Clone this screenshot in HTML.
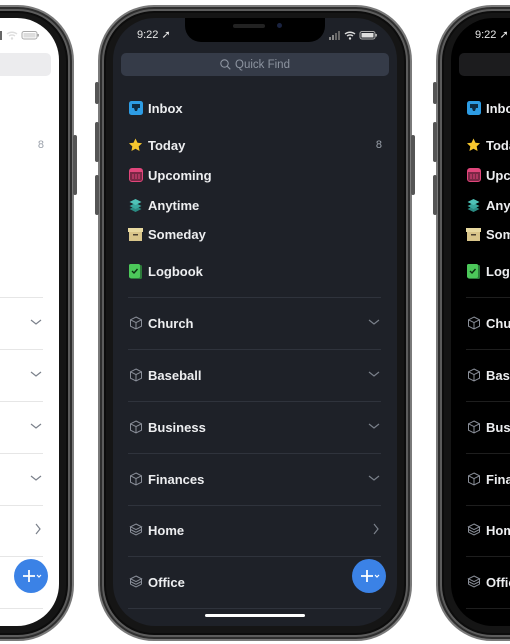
<!DOCTYPE html>
<html><head><meta charset="utf-8"><style>
*{margin:0;padding:0;box-sizing:border-box}
html,body{width:510px;height:644px;overflow:hidden}
body{background:#fff;position:relative;font-family:"Liberation Sans",sans-serif}
.ph{position:absolute;top:0;width:314px;height:644px}
.fr{position:absolute;left:0;top:5px;width:314px;height:636px;border-radius:56px;background:#151515;border:2px solid #7a7a7a;box-shadow:inset 0 0 0 2px #2e2e2e,inset 0 0 0 4px #5c5c5c,inset 0 0 0 6px #0c0c0c}
.btn{position:absolute;width:4px;background:#555;border-radius:2px}
.sc{position:absolute;left:15px;top:18px;width:284px;height:608px;border-radius:42px;overflow:hidden;background:#1e2128}
.notch{position:absolute;left:72px;top:0;width:140px;height:24px;background:#000;border-radius:0 0 16px 16px}
.notch:before{content:"";position:absolute;left:48px;top:6px;width:32px;height:4px;border-radius:2px;background:#222}
.notch:after{content:"";position:absolute;left:92px;top:5px;width:5px;height:5px;border-radius:50%;background:#1a2340}
.time{position:absolute;left:24px;top:10px;font-size:11px;color:#e8e8e8}
.stat{position:absolute;right:18px;top:12px}
.search{position:absolute;left:8px;top:35px;width:268px;height:23px;border-radius:5px;background:#353b48;color:#8d94a0;font-size:11.5px;display:flex;align-items:center;justify-content:center}
.search svg{margin-right:4px}
.row{position:absolute;left:15px;height:20px;width:254px;display:flex;align-items:center;color:#edeef0;font-size:13px;font-weight:bold}
.row .ic{width:15px;height:15px;margin-right:5px;display:flex;align-items:center;justify-content:center}
.row .r{margin-left:auto;color:#9aa0aa;font-weight:normal;font-size:11px}
.sep{position:absolute;left:15px;width:253px;height:1px;background:#2f333c}
.hb{position:absolute;left:92px;top:596px;width:100px;height:3px;border-radius:2px;background:#fff}
.fab{position:absolute;left:239px;top:541px;width:34px;height:34px;border-radius:50%;background:#3b82e6;color:#fff}
.light .sc{background:#fff}.light .row{color:#111}.light .sep{background:#e6e6e6}.light .search{background:#ececee}.light .time{color:#111}.light .hb{background:#000}
.black .sc{background:#000}.black .search{background:#1c1c1e}.black .sep{background:#1e1e1e}
</style></head><body>
<div id="p" class="ph" style="left:98px">
<div class="fr"></div>
<div class="btn" style="left:-3px;top:82px;height:22px"></div>
<div class="btn" style="left:-3px;top:122px;height:40px"></div>
<div class="btn" style="left:-3px;top:175px;height:40px"></div>
<div class="btn" style="left:313px;top:135px;height:60px"></div>
<div class="sc">
<div class="notch"></div>
<div class="time">9:22 ➚</div>
<svg class="stat" width="50" height="10" viewBox="0 0 50 10"><rect x="0" y="7" width="2" height="3" fill="#888"/><rect x="3" y="5" width="2" height="5" fill="#888"/><rect x="6" y="3" width="2" height="7" fill="#666"/><rect x="9" y="1" width="2" height="9" fill="#666"/><path d="M16 4a8 8 0 0 1 10 0M18 6a5 5 0 0 1 6 0" stroke="#ddd" stroke-width="1.4" fill="none"/><circle cx="21" cy="8.5" r="1.2" fill="#ddd"/><rect x="31" y="1.5" width="15" height="7.5" rx="2" fill="none" stroke="#aaa"/><rect x="32.5" y="3" width="12" height="4.5" fill="#ddd"/><rect x="46.5" y="4" width="1.5" height="2.5" fill="#aaa"/></svg>
<div class="search"><svg width="11" height="11"><circle cx="4.5" cy="4.5" r="3.7" stroke="#8d94a0" stroke-width="1.1" fill="none"/><path d="M7.3 7.3l3 3" stroke="#8d94a0" stroke-width="1.1"/></svg>Quick Find</div>
<div class="row" style="top:80px"><span class="ic"><svg width="14" height="14"><rect width="14" height="14" rx="2.5" fill="#2d9ce4"/><path d="M3 3h8v4h-2l-1 3h-2l-1-3h-2z" fill="#0d2c44"/></svg></span>Inbox</div>
<div class="row" style="top:117px"><span class="ic"><svg width="16" height="16" viewBox="0 0 24 24"><path d="M12 1.5l3.2 6.8 7.3.9-5.4 5 1.4 7.3L12 17.9l-6.5 3.6 1.4-7.3-5.4-5 7.3-.9z" fill="#f7c72f"/></svg></span>Today<span class="r">8</span></div>
<div class="row" style="top:147px"><span class="ic"><svg width="14" height="14"><rect x=".5" y=".5" width="13" height="13" rx="2.5" fill="#7a2745" stroke="#e0467b"/><rect x="1" y="1" width="12" height="3" fill="#e0467b"/><path d="M4 6v5M7 6v5M10 6v5" stroke="#e0467b"/></svg></span>Upcoming</div>
<div class="row" style="top:177px"><span class="ic"><svg width="15" height="14"><path d="M7.5 8l6 3-6 3-6-3z" fill="#2a8a82"/><path d="M7.5 5l6 3-6 3-6-3z" fill="#38a89e"/><path d="M7.5 1l6 3-6 3-6-3z" fill="#4fc3b8"/></svg></span>Anytime</div>
<div class="row" style="top:206px"><span class="ic"><svg width="15" height="13"><rect width="15" height="4" fill="#e8d9a0"/><rect x="1" y="4" width="13" height="9" fill="#d9c58a"/><rect x="5" y="6" width="5" height="1.5" fill="#4a4030"/></svg></span>Someday</div>
<div class="row" style="top:243px"><span class="ic"><svg width="13" height="15"><rect x="1" y="1" width="12" height="14" rx="1.5" fill="#2c7a3a"/><rect width="11" height="14" rx="1.5" fill="#4cc85a"/><path d="M3 7l2 2 3.5-4" stroke="#0c2e12" stroke-width="1.4" fill="none"/></svg></span>Logbook</div>
<div class="sep" style="top:279px"></div>
<div class="sep" style="top:331px"></div>
<div class="sep" style="top:383px"></div>
<div class="sep" style="top:435px"></div>
<div class="sep" style="top:487px"></div>
<div class="sep" style="top:538px"></div>
<div class="sep" style="top:590px"></div>
<div class="hb"></div>
<div class="fab"><svg width="34" height="34"><path d="M9 17h12M15 11v12" stroke="#fff" stroke-width="1.8"/><path d="M23 16l2 2 2-2" stroke="#fff" stroke-width="1.2" fill="none"/></svg></div>
</div>
</div>
<script>
var p=document.getElementById('p'),sc=p.querySelector('.sc');
var items=[["Church",295,"d"],["Baseball",347,"d"],["Business",399,"d"],["Finances",451,"d"],["Home",502,"r"],["Office",554,""]];
items.forEach(function(it){var d=document.createElement('div');d.className='row';d.style.top=it[1]+'px';
var stack=it[0]=="Home"||it[0]=="Office";
var ic=stack?'<svg width="14" height="14" viewBox="0 0 14 14" fill="none" stroke="#8a8f99" stroke-width="1"><path d="M7 1l5.5 2.8L7 6.6 1.5 3.8z"/><path d="M1.5 6.5L7 9.3l5.5-2.8M1.5 9.2L7 12l5.5-2.8M1.5 3.8v5.4M12.5 3.8v5.4"/></svg>':'<svg width="14" height="14" viewBox="0 0 14 14" fill="none" stroke="#8a8f99" stroke-width="1"><path d="M7 1l5.5 2.8v6.4L7 13 1.5 10.2V3.8z"/><path d="M1.5 3.8L7 6.6l5.5-2.8M7 6.6V13"/></svg>';
var ch=it[2]=="d"?'<svg width="12" height="8"><path d="M1 2l5 4 5-4" stroke="#7a808a" stroke-width="1.2" fill="none"/></svg>':it[2]=="r"?'<svg width="8" height="12"><path d="M2 1l4 5-4 5" stroke="#7a808a" stroke-width="1.2" fill="none"/></svg>':'';
d.innerHTML='<span class="ic">'+ic+'</span>'+it[0]+'<span class="r" style="margin-right:2px">'+ch+'</span>';sc.appendChild(d);});
var l=p.cloneNode(true);l.id='';l.classList.add('light');l.style.left='-240px';document.body.appendChild(l);
var r=p.cloneNode(true);r.id='';r.classList.add('black');r.style.left='436px';r.querySelector('.fab').style.display='none';document.body.appendChild(r);
</script>
</body></html>
